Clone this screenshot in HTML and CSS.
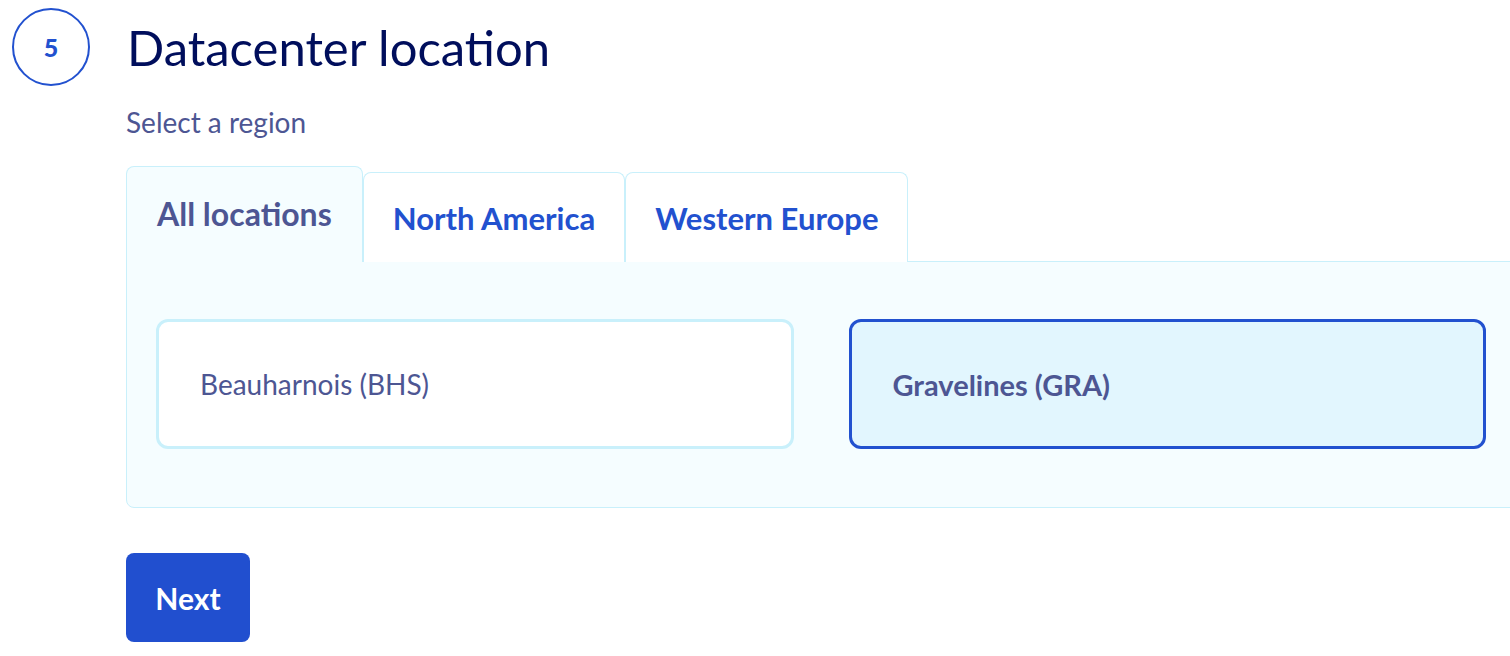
FILE: index.html
```html
<!DOCTYPE html>
<html>
<head>
<meta charset="utf-8">
<link rel="stylesheet" href="styles.css">
</head>
<body>
<div class="step">
  <div class="step-head">
    <div class="step-num">5</div>
    <h2 class="step-title">Datacenter location</h2>
  </div>
  <div class="step-body">
    <p class="subtitle">Select a region</p>
    <div class="tabs">
      <div class="tab tab-active">All locations</div>
      <div class="tab">North America</div>
      <div class="tab">Western Europe</div>
    </div>
    <div class="panel">
      <div class="card">Beauharnois (BHS)</div>
      <div class="card card-selected">Gravelines (GRA)</div>
    </div>
    <button class="btn-next">Next</button>
  </div>
</div>
</body>
</html>
```
FILE: styles.css
```css
html, body {
  margin: 0;
  padding: 0;
  background: #fff;
  overflow: hidden;
}
body {
  font-family: Lato, "Noto Sans", sans-serif;
  width: 1510px;
  height: 656px;
}
.step {
  padding: 8px 0 0 12px;
}
.step-head {
  display: flex;
  align-items: center;
  gap: 37px;
}
.step-num {
  width: 74px;
  height: 74px;
  border: 2px solid #2251cf;
  border-radius: 50%;
  display: flex;
  align-items: center;
  justify-content: center;
  color: #2251cf;
  font-weight: 900;
  font-size: 25px;
  flex: none;
}
.step-title {
  margin: 0;
  font-size: 49px;
  font-weight: 400;
  color: #000e5c;
  line-height: 1;
}
.step-body {
  padding-left: 114px;
}
.subtitle {
  margin: 20px 0 0 0;
  font-size: 28px;
  color: #4d5693;
  line-height: 32px;
}
.tabs {
  margin-top: 28px;
  display: flex;
  align-items: flex-end;
}
.tab {
  height: 90px;
  box-sizing: border-box;
  padding: 0 29px;
  display: flex;
  align-items: center;
  border: 1px solid #c9f0fb;
  border-bottom: none;
  border-radius: 8px 8px 0 0;
  background: #fff;
  color: #2251cf;
  font-weight: 700;
  font-size: 31px;
}
.tab-active {
  height: 96px;
  padding: 0 30px 2px 30px;
  background: #f5fdff;
  color: #4d5693;
  font-size: 32px;
}
.panel {
  width: 1390px;
  box-sizing: border-box;
  height: 247px;
  margin-top: -1px;
  background: #f5fdff;
  border: 1px solid #c9f0fb;
  border-radius: 0 0 0 8px;
  padding: 57px 29px 0 29px;
  display: grid;
  grid-template-columns: 1fr 1fr;
  column-gap: 55px;
  align-items: start;
}
.card {
  height: 130px;
  box-sizing: border-box;
  border: 3px solid #c9f0fb;
  border-radius: 12px;
  background: #fff;
  display: flex;
  align-items: center;
  padding-left: 41px;
  font-size: 28px;
  color: #4d5693;
}
.card-selected {
  border-color: #2251cf;
  background: #e2f6fe;
  font-weight: 700;
  font-size: 29px;
}
.btn-next {
  margin-top: 45px;
  display: block;
  width: 124px;
  height: 89px;
  border: none;
  border-radius: 8px;
  background: #214fcf;
  color: #fff;
  font-family: inherit;
  font-weight: 700;
  font-size: 30px;
  padding: 0;
}
```
